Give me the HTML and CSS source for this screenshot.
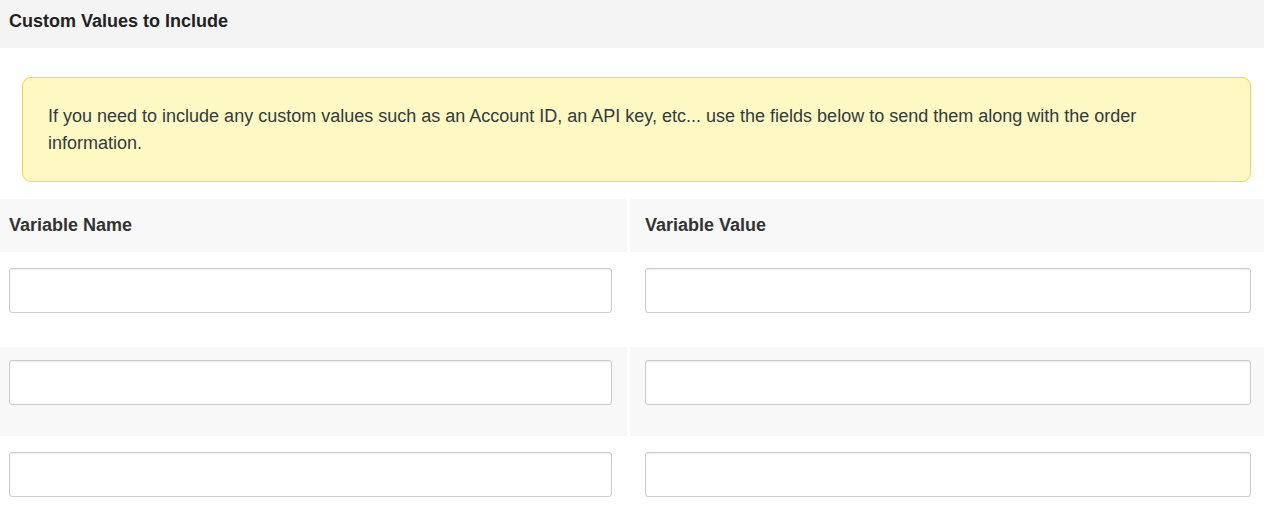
FILE: index.html
```html
<!DOCTYPE html>
<html>
<head>
<meta charset="utf-8">
<link rel="stylesheet" href="styles.css">
</head>
<body>
<div class="panel-head">Custom Values to Include</div>
<div class="panel-body">
  <div class="alert">If you need to include any custom values such as an Account ID, an API key, etc... use the fields below to send them along with the order information.</div>
</div>
<div class="vars">
  <div class="cell head left">Variable Name</div>
  <div class="cell head right">Variable Value</div>
  <div class="cell left"><input class="field" type="text"></div>
  <div class="cell right"><input class="field" type="text"></div>
  <div class="cell left alt"><input class="field" type="text"></div>
  <div class="cell right alt"><input class="field" type="text"></div>
  <div class="cell left"><input class="field" type="text"></div>
  <div class="cell right"><input class="field" type="text"></div>
</div>
</body>
</html>
```
FILE: styles.css
```css
html, body {
  margin: 0;
  padding: 0;
  background: #ffffff;
  font-family: "Liberation Sans", Arial, sans-serif;
  color: #333333;
}
.panel-head {
  height: 48px;
  box-sizing: border-box;
  background: #f4f4f4;
  padding: 0 9px 5px 9px;
  display: flex;
  align-items: center;
  font-weight: bold;
  font-size: 18px;
  color: #222222;
}
.panel-body {
  padding: 29px 13px 17px 22px;
}
.alert {
  background: #fef9c3;
  border: 1px solid #fcd34d;
  border-radius: 9px;
  padding: 25px 25px 24px 25px;
  font-size: 18px;
  line-height: 27px;
  color: #333a40;
}
.vars {
  display: grid;
  grid-template-columns: 627px 1fr;
  column-gap: 3px;
  row-gap: 3px;
}
.cell {
  box-sizing: border-box;
}
.cell.head {
  height: 53px;
  background: #f8f8f8;
  font-weight: bold;
  font-size: 18px;
  color: #333333;
  display: flex;
  align-items: center;
}
.cell.left {
  padding-left: 9px;
  padding-right: 15px;
}
.cell.right {
  padding-left: 15px;
  padding-right: 13px;
}
.cell:not(.head) {
  height: 89px;
  padding-top: 13px;
}
.cell.alt {
  background: #f8f8f8;
}
.field {
  display: block;
  width: 100%;
  height: 45px;
  box-sizing: border-box;
  margin: 0;
  border: 1px solid #cccccc;
  border-radius: 3px;
  background: #ffffff;
  box-shadow: inset 0 1px 2px rgba(0, 0, 0, 0.08);
  font-family: "Liberation Sans", Arial, sans-serif;
  font-size: 16px;
  padding: 6px 10px;
  outline: none;
}
```
